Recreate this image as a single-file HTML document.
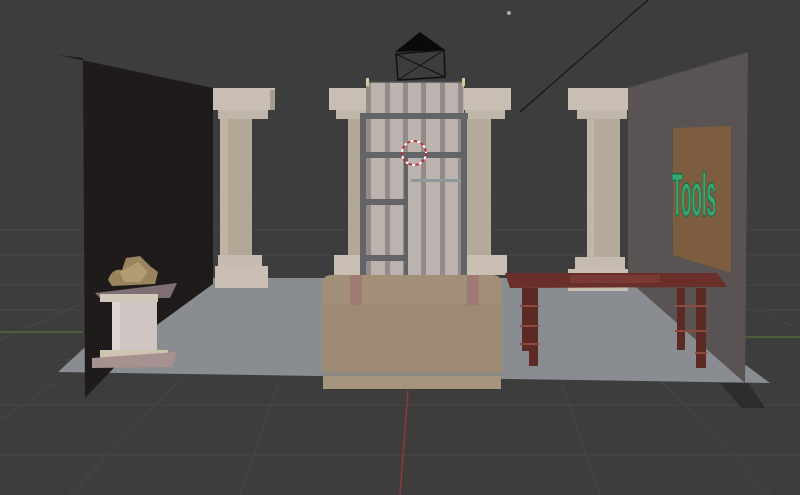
<!DOCTYPE html>
<html><head><style>html,body{margin:0;padding:0;background:#3d3d3d;overflow:hidden}svg{display:block}</style></head>
<body>
<svg width="800" height="495" viewBox="0 0 800 495" xmlns="http://www.w3.org/2000/svg">
<rect width="800" height="495" fill="#3d3d3d"/>
<g stroke="#474747" stroke-width="1" fill="none">
<line x1="0" y1="200" x2="800" y2="200"/><line x1="0" y1="230" x2="800" y2="230"/>
<line x1="0" y1="255" x2="800" y2="255"/><line x1="0" y1="285" x2="800" y2="285"/>
<line x1="0" y1="310" x2="800" y2="310"/><line x1="0" y1="360" x2="800" y2="360"/>
<line x1="0" y1="405" x2="800" y2="405"/><line x1="0" y1="455" x2="800" y2="455"/>
<line x1="180" y1="380" x2="70" y2="495"/><line x1="280" y1="380" x2="240" y2="495"/>
<line x1="560" y1="380" x2="600" y2="495"/><line x1="660" y1="380" x2="770" y2="495"/>
<line x1="0" y1="340" x2="90" y2="300"/><line x1="740" y1="300" x2="800" y2="330"/>
<line x1="0" y1="420" x2="60" y2="380"/>
</g>
<line x1="0" y1="332" x2="83" y2="332" stroke="#5d7a35" stroke-width="1"/>
<line x1="745" y1="337" x2="800" y2="337" stroke="#5d7a35" stroke-width="1"/>
<line x1="520" y1="112" x2="648" y2="0" stroke="#151515" stroke-width="1.2"/>
<circle cx="509" cy="13" r="2" fill="#aab"/>
<polygon points="160,278 628,278 770,383 58,372" fill="#898c91"/>
<polygon points="58,55 213,88 213,284 150,330 85,398 83,58" fill="#1f1b1b"/>
<polygon points="628,88 748,52 745,383 628,280" fill="#5a5354"/>
<polygon points="720,383 748,383 765,408 742,408" fill="#2e2b2b"/>
<polygon points="673,128 731,126 731,273 673,255" fill="#7d5d40"/>
<text x="0" y="0" transform="translate(672,216) scale(0.5,1.8)" font-family="Liberation Sans, sans-serif" font-weight="bold" font-size="34" fill="#3aa774" stroke="#1f6e48" stroke-width="1">Tools</text>
<g>
<rect x="213" y="88" width="62" height="22" fill="#c8bfb2"/><rect x="270" y="90" width="5" height="20" fill="#a59b8e"/>
<rect x="218" y="110" width="50" height="9" fill="#c0b7aa"/>
<rect x="220" y="119" width="32" height="136" fill="#b3a896"/><rect x="220" y="119" width="8" height="136" fill="#c0b5a5"/>
<rect x="218" y="255" width="44" height="11" fill="#c5bcaf"/>
<rect x="215" y="266" width="53" height="22" fill="#c8bfb2"/>
</g>
<g>
<rect x="568" y="88" width="60" height="22" fill="#c8bfb2"/>
<rect x="577" y="110" width="50" height="9" fill="#c0b7aa"/>
<rect x="587" y="119" width="33" height="138" fill="#b5aa99"/><rect x="587" y="119" width="7" height="138" fill="#c1b7a8"/>
<rect x="575" y="257" width="50" height="12" fill="#c5bcaf"/>
<rect x="568" y="269" width="60" height="22" fill="#c8bfb2"/>
</g>
<rect x="329" y="88" width="40" height="22" fill="#c8bfb2"/><rect x="336" y="110" width="32" height="9" fill="#c0b7aa"/>
<rect x="348" y="119" width="16" height="140" fill="#b3a896"/>
<rect x="334" y="255" width="34" height="20" fill="#c8bfb2"/>
<rect x="463" y="88" width="48" height="22" fill="#c8bfb2"/><rect x="465" y="110" width="40" height="9" fill="#c0b7aa"/>
<rect x="467" y="119" width="24" height="140" fill="#b5aa99"/>
<rect x="465" y="255" width="42" height="20" fill="#c8bfb2"/>
<rect x="366" y="82" width="98" height="193" fill="#bcb2ae"/>
<g fill="#938a89"><rect x="385" y="82" width="5" height="193"/><rect x="403" y="82" width="5" height="193"/><rect x="421" y="82" width="5" height="193"/><rect x="440" y="82" width="5" height="193"/><rect x="458" y="82" width="5" height="193"/><rect x="366" y="82" width="5" height="193"/></g>
<line x1="368" y1="82" x2="464" y2="82" stroke="#555" stroke-width="1.5"/>
<rect x="366" y="78" width="3" height="8" fill="#d6cc9a"/><rect x="462" y="78" width="3" height="8" fill="#d6cc9a"/>
<g fill="#626468">
<rect x="360" y="113" width="108" height="6"/><rect x="360" y="113" width="6" height="162"/><rect x="461" y="113" width="6" height="162"/>
<rect x="365" y="152" width="100" height="6"/><rect x="365" y="199" width="43" height="6"/><rect x="365" y="255" width="43" height="6"/>
<rect x="404" y="158" width="4" height="117"/>
</g>
<rect x="411" y="179" width="50" height="3" fill="#8d9a98"/>
<circle cx="414" cy="153" r="12" fill="none" stroke="#c03030" stroke-width="2" stroke-dasharray="4 3"/>
<circle cx="414" cy="153" r="12" fill="none" stroke="#fff" stroke-width="2" stroke-dasharray="3 4" stroke-dashoffset="3.5"/>
<path d="M322,285 Q322,275 332,275 L492,275 Q502,275 502,285 L502,305 L322,305 Z" fill="#a18f78"/>
<line x1="322" y1="305" x2="502" y2="305" stroke="#8e7d67" stroke-width="1"/>
<rect x="322" y="305" width="180" height="67" fill="#9c8a72"/>
<rect x="322" y="372" width="180" height="4" fill="#8b8886"/>
<rect x="323" y="376" width="178" height="13" fill="#a6957e"/>
<rect x="350" y="275" width="12" height="30" fill="#a07b76"/><rect x="467" y="275" width="12" height="30" fill="#a07b76"/>
<polygon points="505,273 717,273 727,287 510,288" fill="#6b2f2b"/>
<rect x="570" y="275" width="90" height="8" fill="#7a3a36"/>
<g fill="#5c2a25">
<rect x="522" y="288" width="7" height="63"/><rect x="529" y="288" width="9" height="78"/>
<rect x="677" y="288" width="8" height="62"/><rect x="696" y="288" width="10" height="80"/>
</g>
<g fill="#8b4a3e"><rect x="520" y="305" width="19" height="2"/><rect x="520" y="325" width="19" height="2"/><rect x="520" y="343" width="19" height="2"/><rect x="675" y="305" width="33" height="2"/><rect x="675" y="330" width="33" height="2"/><rect x="695" y="352" width="12" height="2"/></g>
<polygon points="95,293 177,283 170,298 100,298" fill="#7e6f73"/>
<rect x="100" y="294" width="58" height="8" fill="#d0c8b8"/>
<rect x="112" y="302" width="45" height="52" fill="#cfc5c3"/><rect x="112" y="302" width="8" height="52" fill="#ddd5d2"/>
<rect x="100" y="350" width="68" height="8" fill="#cfc4b0"/>
<polygon points="92,358 177,352 172,367 92,368" fill="#a5918f"/>
<path d="M108,280 Q112,268 122,270 L126,258 L140,256 L150,266 L158,272 L155,284 L112,286 Z" fill="#9a8460"/>
<path d="M120,272 L138,262 L148,272 L140,282 L124,282 Z" fill="#b39c73"/>
<polygon points="395,52 420,32 445,50" fill="#0a0a0a"/>
<polygon points="396,54 444,50 445,77 398,80" fill="none" stroke="#111" stroke-width="1.5"/>
<line x1="396" y1="54" x2="445" y2="77" stroke="#111"/><line x1="444" y1="50" x2="398" y2="80" stroke="#111"/>
<line x1="408" y1="390" x2="400" y2="495" stroke="#8a3a3a" stroke-width="1.5"/>
</svg>
</body></html>
